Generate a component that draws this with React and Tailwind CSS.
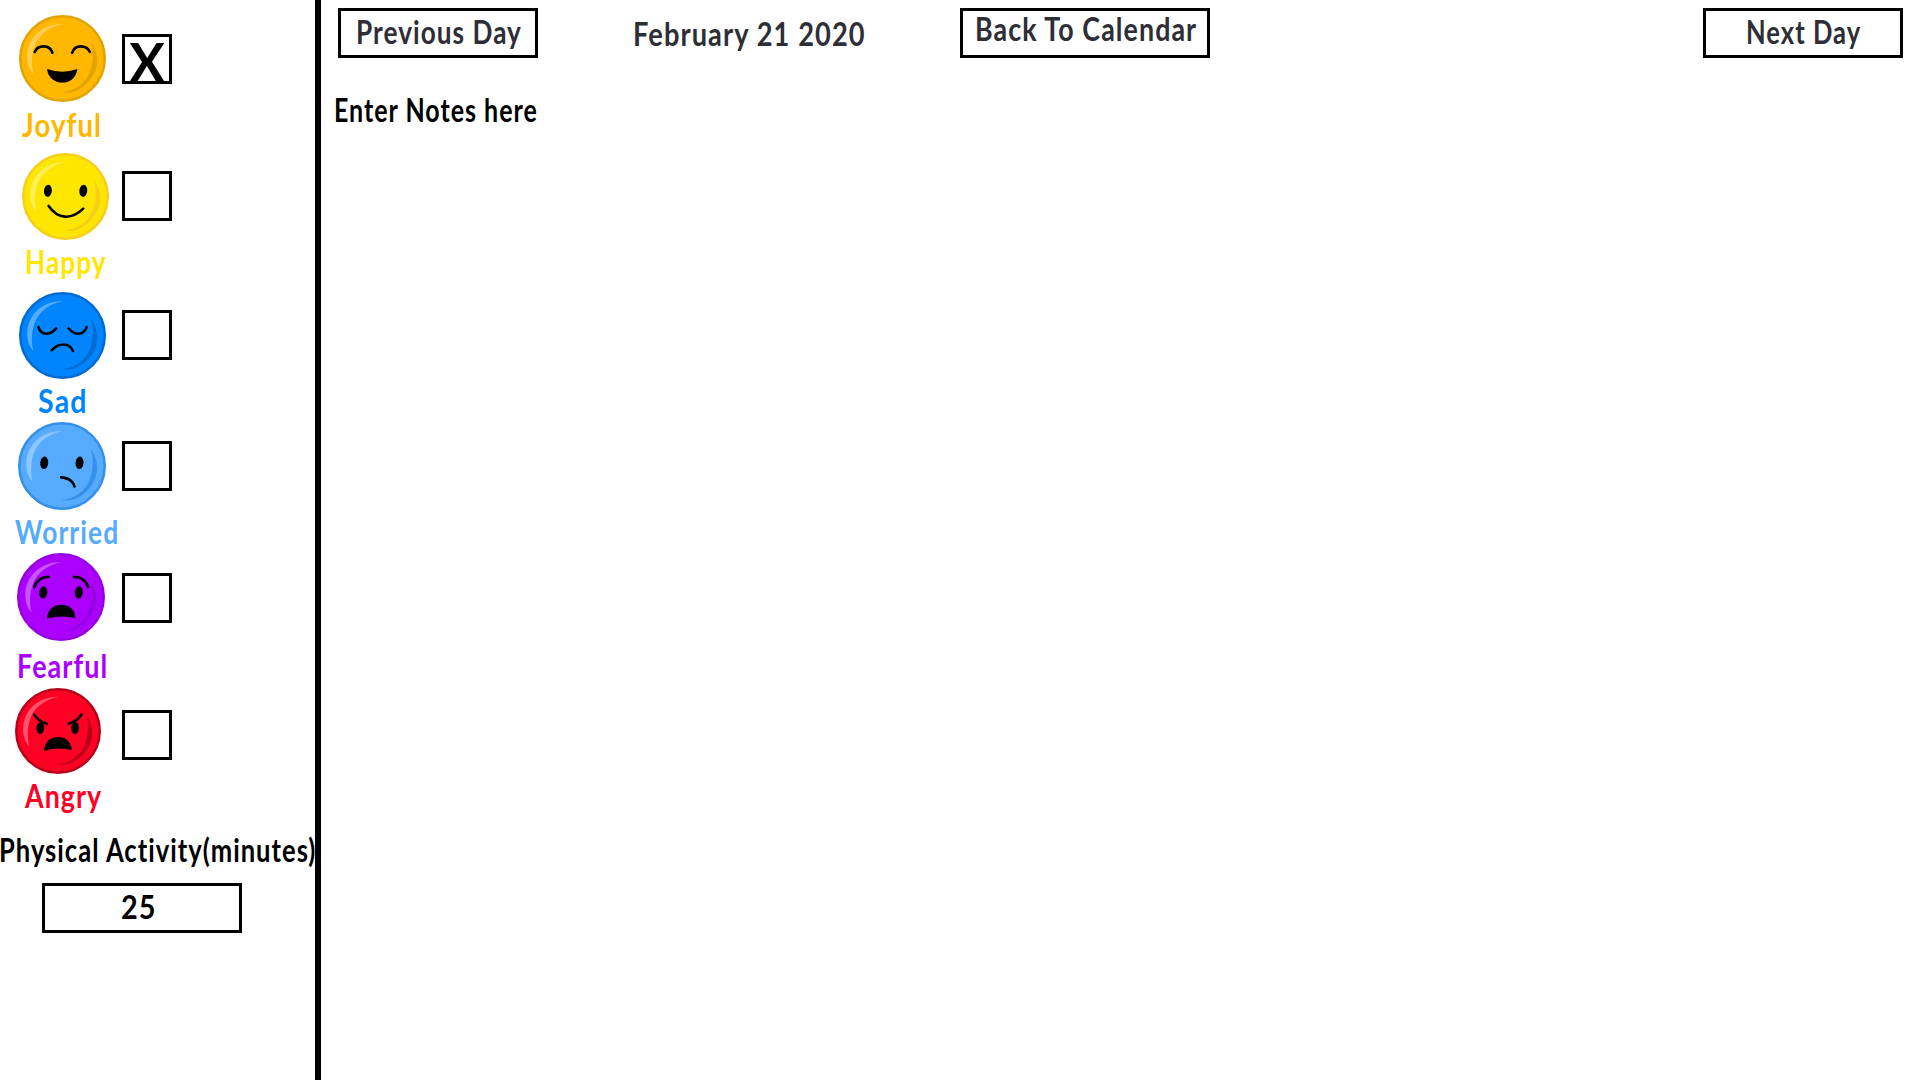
import { useLayoutEffect, useRef, useState } from "react";

// A single line of text condensed or widened to fill its box.
function FitText({ children, className = "" }) {
  const box = useRef(null);
  const text = useRef(null);
  const [scale, setScale] = useState(1);
  useLayoutEffect(() => {
    setScale(box.current.clientWidth / text.current.offsetWidth);
  }, [children]);
  return (
    <div ref={box} className={`h-10 shrink-0 text-[32px] leading-[42px] font-bold tracking-[0.04em] whitespace-nowrap [font-variant-ligatures:none] ${className}`}>
      <span ref={text} className="inline-block origin-left" style={{ transform: `scaleX(${scale})` }}>
        {children}
      </span>
    </div>
  );
}

const line = { fill: "none", stroke: "#000", strokeWidth: 2.6, strokeLinecap: "round" };

function Eyes({ x1, x2, y }) {
  return (
    <g>
      <ellipse cx={x1} cy={y} rx="4" ry="6.2" transform={`rotate(5 ${x1} ${y})`} />
      <ellipse cx={x2} cy={y} rx="4" ry="6.2" transform={`rotate(5 ${x2} ${y})`} />
    </g>
  );
}

const features = {
  Joyful: (
    <g>
      <path {...line} d="M15.9 37.4C19 30 31 29.5 33.8 38.2M53.8 38.2C56.5 29.5 68 30 71.8 37.4" />
      <path d="M28.3 54.6Q44 60 59 54.6C58 63 52 68.4 44 68.4S29.3 63 28.3 54.6Z" />
    </g>
  ),
  Happy: (
    <g>
      <Eyes x1={26.2} x2={62} y={38.2} />
      <path {...line} d="M26.9 53.5C36.3 67 50 68 61.9 56.3" />
    </g>
  ),
  Sad: (
    <g>
      <path {...line} d="M19.7 35.6C22.7 44 30.8 44.5 37.6 36.9M50.3 36.9C57 44.5 65 44 68.4 35.6M33.1 59C40.5 51 51 51 54.7 59.8" />
    </g>
  ),
  Worried: (
    <g>
      <Eyes x1={26.2} x2={61.5} y={40.8} />
      <path {...line} d="M43.2 55.4C49.7 55.7 54.7 58.7 56.5 64.5" />
    </g>
  ),
  Fearful: (
    <g>
      <Eyes x1={26.3} x2={61.8} y={39.5} />
      <path {...line} d="M17.3 34C20 27 25 23.7 31.7 23.9M56.9 23.9C63.5 23.7 68.5 27 71.2 34" />
      <path d="M30 65.8C30.5 57 36 51.7 44.3 51.7S58 57 58.5 65Q44.5 61.5 30 65.8Z" />
    </g>
  ),
  Angry: (
    <g>
      <Eyes x1={26} x2={61.5} y={41} />
      <path {...line} d="M19.5 27C23 32.5 27 35 32.7 36.6M55 36.6C60.5 35 65 32.5 68.2 27" />
      <path d="M29.7 64.4C30.5 55.5 35.5 50.2 44 50.2S57.5 55.5 58.2 63.7Q44.5 60 29.7 64.4Z" />
    </g>
  ),
};

function Face({ mood, fill, rim, className }) {
  return (
    <svg viewBox="0 0 88 88" className={`shrink-0 ${className}`}>
      <circle cx="44" cy="44" r="42.7" fill={fill} stroke={rim} strokeWidth="2.6" />
      <path fill="#fff" opacity=".33" d="M44.5 9C24 8.5 8.3 23 8.3 42C8.3 50 11 56 14.5 59.5C12.3 50 12.8 40 15.5 32C20 19 31 12 44.5 9Z" />
      <path fill={rim} d="M73 27.5C81 38.5 81 52.5 74 62.5C66.5 74.5 54.5 80.3 43.5 78.2C56 77 66.5 69.5 71 59.5C75 50 75.8 38 73 27.5Z" />
      {features[mood]}
    </svg>
  );
}

const moods = [
  { name: "Joyful", fill: "#ffb700", rim: "#e3a300", row: "mt-[15px] pl-[19px]", face: "size-[87px]", box: "mt-[19px] ml-[16px]", label: "mt-[2px] ml-[22px] w-[80px] text-[#ffb700]", checked: true },
  { name: "Happy", fill: "#ffe600", rim: "#f5cf1c", row: "mt-[9px] pl-[22px]", face: "size-[87px]", box: "mt-[18px] ml-[13px]", label: "mt-[1px] ml-[25px] w-[82px] text-[#ffe600]" },
  { name: "Sad", fill: "#0085ff", rim: "#006bd1", row: "mt-[11px] pl-[19px]", face: "size-[87px]", box: "mt-[18px] ml-[16px]", label: "mt-[1px] ml-[38px] w-[50px] text-[#0085ff]" },
  { name: "Worried", fill: "#57abff", rim: "#3490ea", row: "mt-[2px] pl-[18px]", face: "size-[88px]", box: "mt-[19px] ml-[16px]", label: "mt-[1px] ml-[15px] w-[104px] text-[#57abff]" },
  { name: "Fearful", fill: "#ab00ff", rim: "#9700e2", row: "mt-[2px] pl-[17px]", face: "size-[88px]", box: "mt-[20px] ml-[17px]", label: "mt-[4px] ml-[17px] w-[91px] text-[#ab00ff]" },
  { name: "Angry", fill: "#ff0024", rim: "#b90019", row: "mt-[3px] pl-[15px]", face: "size-[86px]", box: "mt-[22px] ml-[21px]", label: "mt-[1px] ml-[25px] w-[77px] text-[#ff0024]" },
];

function Mood({ mood }) {
  return (
    <div className="flex flex-col">
      <div className={`flex items-start ${mood.row}`}>
        <Face mood={mood.name} fill={mood.fill} rim={mood.rim} className={mood.face} />
        <div className={`flex size-[50px] shrink-0 justify-center border-3 border-black ${mood.box}`}>
          {mood.checked && <span className="text-[53px] leading-[50px] font-bold">X</span>}
        </div>
      </div>
      <FitText className={mood.label}>{mood.name}</FitText>
    </div>
  );
}

export default function App() {
  return (
    <div className="flex h-[1080px] w-[1920px] overflow-hidden bg-white font-['Lato',sans-serif] text-black">
      <aside className="flex w-[321px] shrink-0 flex-col border-r-6 border-black">
        {moods.map((mood) => (
          <Mood key={mood.name} mood={mood} />
        ))}
        <FitText className="mt-[14px] -ml-px w-[317px]">Physical Activity(minutes)</FitText>
        <div className="mt-[14px] ml-[42px] h-[50px] w-[200px] border-3 border-black pl-[76px]">
          <FitText className="w-[36px]">25</FitText>
        </div>
      </aside>
      <main className="flex flex-1 flex-col">
        <header className="flex items-start pt-2 pl-[17px] text-[#2e2e36]">
          <button className="flex h-[50px] w-[200px] border-3 border-black pl-[15px]">
            <FitText className="w-[166px] text-left">Previous Day</FitText>
          </button>
          <FitText className="mt-[5px] ml-[95px] w-[233px]">February 21 2020</FitText>
          <button className="ml-[94px] flex h-[50px] w-[250px] border-3 border-black pl-[12px]">
            <FitText className="-mt-[3px] w-[222px] text-left">Back To Calendar</FitText>
          </button>
          <button className="ml-[493px] flex h-[50px] w-[200px] border-3 border-black pl-[40px]">
            <FitText className="w-[115px] text-left">Next Day</FitText>
          </button>
        </header>
        <FitText className="mt-[31px] ml-[13px] w-[204px]">Enter Notes here</FitText>
      </main>
    </div>
  );
}
